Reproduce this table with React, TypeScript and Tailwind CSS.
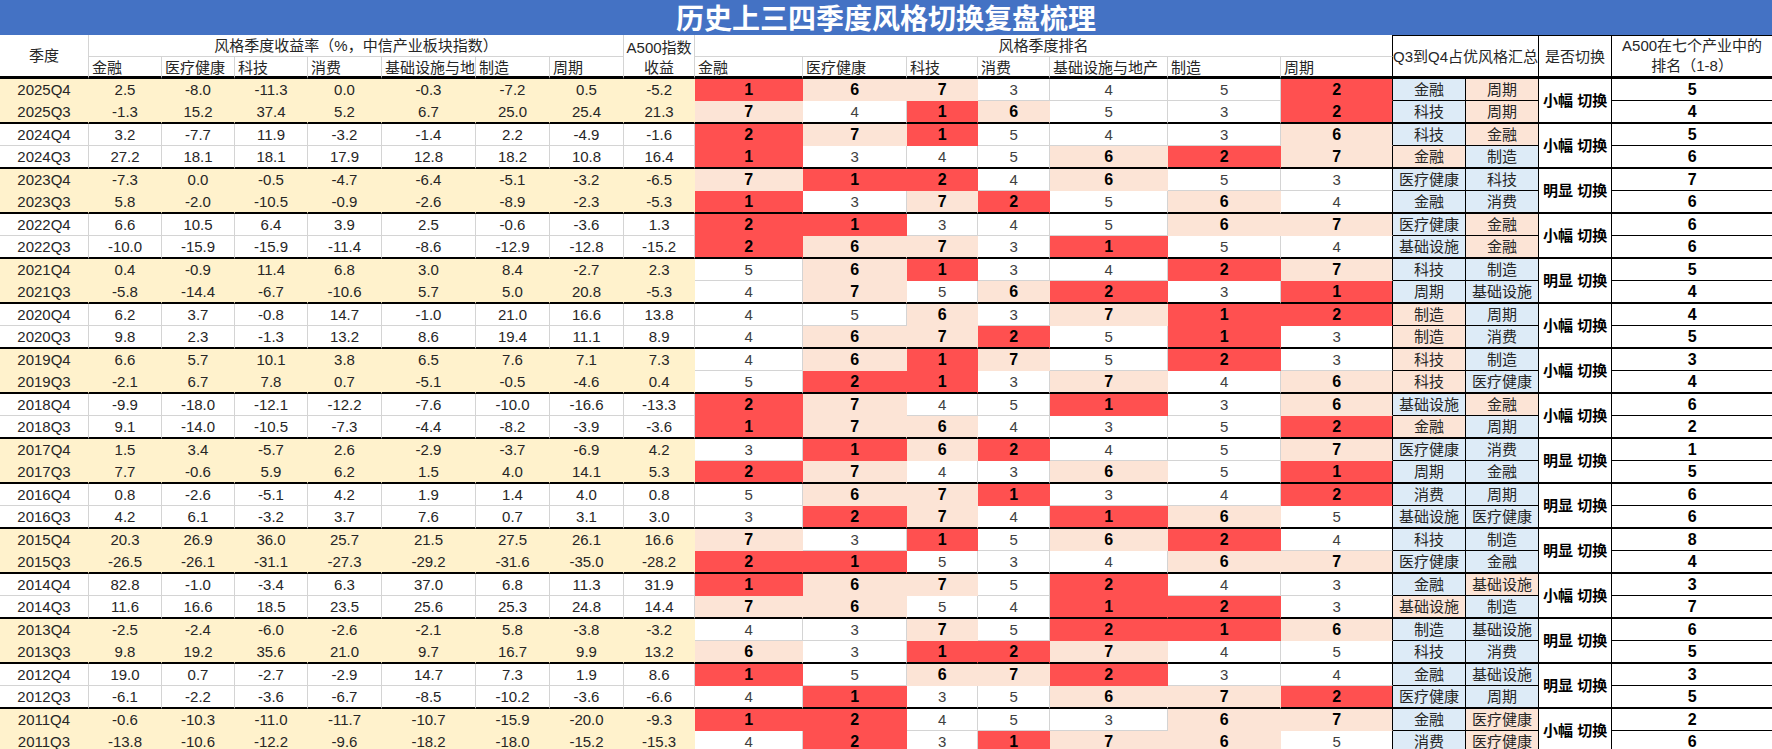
import React from 'react'

type Row = { q: string; ret: string[]; rk: number[]; pick: string[]; a500: number }
type Group = { sw: string; rows: Row[] }

const raw: [string, string, string, string, number][] = [
  ['2025Q4', '2.5 -8.0 -11.3 0.0 -0.3 -7.2 0.5 -5.2', '1 6 7 3 4 5 2', '金融 周期', 5],
  ['2025Q3', '-1.3 15.2 37.4 5.2 6.7 25.0 25.4 21.3', '7 4 1 6 5 3 2', '科技 周期', 4],
  ['2024Q4', '3.2 -7.7 11.9 -3.2 -1.4 2.2 -4.9 -1.6', '2 7 1 5 4 3 6', '科技 金融', 5],
  ['2024Q3', '27.2 18.1 18.1 17.9 12.8 18.2 10.8 16.4', '1 3 4 5 6 2 7', '金融 制造', 6],
  ['2023Q4', '-7.3 0.0 -0.5 -4.7 -6.4 -5.1 -3.2 -6.5', '7 1 2 4 6 5 3', '医疗健康 科技', 7],
  ['2023Q3', '5.8 -2.0 -10.5 -0.9 -2.6 -8.9 -2.3 -5.3', '1 3 7 2 5 6 4', '金融 消费', 6],
  ['2022Q4', '6.6 10.5 6.4 3.9 2.5 -0.6 -3.6 1.3', '2 1 3 4 5 6 7', '医疗健康 金融', 6],
  ['2022Q3', '-10.0 -15.9 -15.9 -11.4 -8.6 -12.9 -12.8 -15.2', '2 6 7 3 1 5 4', '基础设施 金融', 6],
  ['2021Q4', '0.4 -0.9 11.4 6.8 3.0 8.4 -2.7 2.3', '5 6 1 3 4 2 7', '科技 制造', 5],
  ['2021Q3', '-5.8 -14.4 -6.7 -10.6 5.7 5.0 20.8 -5.3', '4 7 5 6 2 3 1', '周期 基础设施', 4],
  ['2020Q4', '6.2 3.7 -0.8 14.7 -1.0 21.0 16.6 13.8', '4 5 6 3 7 1 2', '制造 周期', 4],
  ['2020Q3', '9.8 2.3 -1.3 13.2 8.6 19.4 11.1 8.9', '4 6 7 2 5 1 3', '制造 消费', 5],
  ['2019Q4', '6.6 5.7 10.1 3.8 6.5 7.6 7.1 7.3', '4 6 1 7 5 2 3', '科技 制造', 3],
  ['2019Q3', '-2.1 6.7 7.8 0.7 -5.1 -0.5 -4.6 0.4', '5 2 1 3 7 4 6', '科技 医疗健康', 4],
  ['2018Q4', '-9.9 -18.0 -12.1 -12.2 -7.6 -10.0 -16.6 -13.3', '2 7 4 5 1 3 6', '基础设施 金融', 6],
  ['2018Q3', '9.1 -14.0 -10.5 -7.3 -4.4 -8.2 -3.9 -3.6', '1 7 6 4 3 5 2', '金融 周期', 2],
  ['2017Q4', '1.5 3.4 -5.7 2.6 -2.9 -3.7 -6.9 4.2', '3 1 6 2 4 5 7', '医疗健康 消费', 1],
  ['2017Q3', '7.7 -0.6 5.9 6.2 1.5 4.0 14.1 5.3', '2 7 4 3 6 5 1', '周期 金融', 5],
  ['2016Q4', '0.8 -2.6 -5.1 4.2 1.9 1.4 4.0 0.8', '5 6 7 1 3 4 2', '消费 周期', 6],
  ['2016Q3', '4.2 6.1 -3.2 3.7 7.6 0.7 3.1 3.0', '3 2 7 4 1 6 5', '基础设施 医疗健康', 6],
  ['2015Q4', '20.3 26.9 36.0 25.7 21.5 27.5 26.1 16.6', '7 3 1 5 6 2 4', '科技 制造', 8],
  ['2015Q3', '-26.5 -26.1 -31.1 -27.3 -29.2 -31.6 -35.0 -28.2', '2 1 5 3 4 6 7', '医疗健康 金融', 4],
  ['2014Q4', '82.8 -1.0 -3.4 6.3 37.0 6.8 11.3 31.9', '1 6 7 5 2 4 3', '金融 基础设施', 3],
  ['2014Q3', '11.6 16.6 18.5 23.5 25.6 25.3 24.8 14.4', '7 6 5 4 1 2 3', '基础设施 制造', 7],
  ['2013Q4', '-2.5 -2.4 -6.0 -2.6 -2.1 5.8 -3.8 -3.2', '4 3 7 5 2 1 6', '制造 基础设施', 6],
  ['2013Q3', '9.8 19.2 35.6 21.0 9.7 16.7 9.9 13.2', '6 3 1 2 7 4 5', '科技 消费', 5],
  ['2012Q4', '19.0 0.7 -2.7 -2.9 14.7 7.3 1.9 8.6', '1 5 6 7 2 3 4', '金融 基础设施', 3],
  ['2012Q3', '-6.1 -2.2 -3.6 -6.7 -8.5 -10.2 -3.6 -6.6', '4 1 3 5 6 7 2', '医疗健康 周期', 5],
  ['2011Q4', '-0.6 -10.3 -11.0 -11.7 -10.7 -15.9 -20.0 -9.3', '1 2 4 5 3 6 7', '金融 医疗健康', 2],
  ['2011Q3', '-13.8 -10.6 -12.2 -9.6 -18.2 -18.0 -15.2 -15.3', '4 2 3 1 7 6 5', '消费 医疗健康', 6],
]

const switches = ['小幅', '小幅', '明显', '小幅', '明显', '小幅', '小幅', '小幅', '明显', '明显', '明显', '小幅', '明显', '明显', '小幅']

const rows: Row[] = raw.map(([q, ret, rk, pick, a500]) => ({
  q,
  ret: ret.split(' '),
  rk: rk.split(' ').map(Number),
  pick: pick.split(' '),
  a500,
}))

const groups: Group[] = switches.map((sw, i) => ({ sw, rows: [rows[i * 2], rows[i * 2 + 1]] }))

const widths = [89, 73, 73, 73, 74, 94, 74, 74, 71, 108, 104, 71, 72, 118, 113, 112, 73, 73, 73, 160]
const styles = ['金融', '医疗健康', '科技', '消费']

function rankCls(n: number) {
  if (n <= 2) return 'bg-[#ff5050] border-r-[#ff5050] font-bold text-black text-[16px]'
  if (n >= 6) return 'bg-[#fce4d6] border-r-[#fce4d6] font-bold text-black text-[16px]'
  return 'bg-white border-r-[#d4d4d4] text-[#404040]'
}

function rankBottom(n: number) {
  if (n <= 2) return 'border-b-[#ff5050]'
  if (n >= 6) return 'border-b-[#fce4d6]'
  return 'border-b-[#d4d4d4]'
}

function GroupRows({ g, yellow }: { g: Group; yellow: boolean }) {
  return (
    <>
      {g.rows.map((r, ri) => {
        const last = ri === 1
        const other = g.rows[1 - ri].pick
        const left = yellow ? 'bg-[#fff2cc] border-r-[#fff2cc]' : 'bg-white border-r-[#d4d4d4]'
        const leftB = last
          ? 'border-b-2 border-b-black'
          : yellow
            ? 'border-b border-b-[#fff2cc]'
            : 'border-b border-b-[#d4d4d4]'
        return (
          <tr key={r.q} className={last ? 'h-[23px]' : 'h-[22px]'}>
            <td className={`border-r ${left} ${leftB}`}>{r.q}</td>
            {r.ret.map((v, i) => (
              <td key={i} className={`border-r ${left} ${leftB}`}>
                {v}
              </td>
            ))}
            {r.rk.map((n, i) => (
              <td
                key={i}
                className={`border-r ${rankCls(n)} ${i === 6 ? '!border-r-black' : ''} ${
                  last ? 'border-b-2 border-b-black' : `border-b ${rankBottom(n)}`
                }`}
              >
                {n}
              </td>
            ))}
            {r.pick.map((p, i) => (
              <td
                key={i}
                className={`border-r border-r-black text-[#262626] ${
                  other.includes(p) ? 'bg-[#fce4d6]' : 'bg-[#ddebf7]'
                } ${last ? 'border-b-2 border-b-black' : 'border-b border-b-black'}`}
              >
                {p}
              </td>
            ))}
            {ri === 0 && (
              <td rowSpan={2} className="border-r border-r-black border-b-2 border-b-black bg-white font-bold text-black">
                {g.sw} 切换
              </td>
            )}
            <td
              className={`bg-white font-bold text-black text-[16px] ${
                last ? 'border-b-2 border-b-black' : 'border-b border-b-black'
              }`}
            >
              {r.a500}
            </td>
          </tr>
        )
      })}
    </>
  )
}

export default function App() {
  const sub = 'border-r border-r-[#d4d4d4] border-b-[3px] border-b-black text-left align-bottom pl-[3px] pb-[1px] font-normal whitespace-nowrap overflow-hidden'
  return (
    <div className="w-[1772px] h-[749px] overflow-hidden bg-white text-[#262626] font-[family-name:'Liberation_Sans','Noto_Sans_CJK_SC',sans-serif]">
      <div className="h-[35px] bg-[#4472c4] flex items-center justify-center">
        <span className="text-white font-bold text-[28px] leading-[35px] font-[family-name:'Noto_Sans_CJK_SC',sans-serif]">
          历史上三四季度风格切换复盘梳理
        </span>
      </div>
      <table className="table-fixed border-separate border-spacing-0 w-[1772px] text-[15px] leading-none text-center">
        <colgroup>
          {widths.map((w, i) => (
            <col key={i} style={{ width: w }} />
          ))}
        </colgroup>
        <thead>
          <tr className="h-[20px]">
            <th rowSpan={2} className="border-r border-r-[#d4d4d4] border-b-[3px] border-b-black font-normal">
              季度
            </th>
            <th colSpan={7} className="border-r border-r-[#d4d4d4] border-b border-b-[#d4d4d4] font-normal whitespace-nowrap">
              风格季度收益率（%，中信产业板块指数）
            </th>
            <th className="border-r border-r-[#d4d4d4] font-normal whitespace-nowrap pt-[2px]">A500指数</th>
            <th colSpan={7} className="border-r border-r-black border-b border-b-[#d4d4d4] font-normal">
              风格季度排名
            </th>
            <th colSpan={2} rowSpan={2} className="border-t border-t-black border-r border-r-black border-b-[3px] border-b-black font-normal whitespace-nowrap overflow-hidden">
              Q3到Q4占优风格汇总
            </th>
            <th rowSpan={2} className="border-t border-t-black border-r border-r-black border-b-[3px] border-b-black font-normal whitespace-nowrap">
              是否切换
            </th>
            <th rowSpan={2} className="border-t border-t-black border-b-[3px] border-b-black font-normal leading-[20px]">
              A500在七个产业中的
              <br />
              排名（1-8）
            </th>
          </tr>
          <tr className="h-[20px]">
            {[...styles, '基础设施与地', '制造', '周期'].map((s) => (
              <th key={'l' + s} className={sub}>
                {s}
              </th>
            ))}
            <th className="border-r border-r-[#d4d4d4] border-b-[3px] border-b-black font-normal align-bottom pb-[1px]">收益</th>
            {[...styles, '基础设施与地产', '制造', '周期'].map((s, i) => (
              <th key={'r' + s} className={`${sub} ${i === 6 ? '!border-r-black' : ''}`}>
                {s}
              </th>
            ))}
          </tr>
        </thead>
        <tbody>
          {groups.map((g, i) => (
            <GroupRows key={i} g={g} yellow={i % 2 === 0} />
          ))}
        </tbody>
      </table>
    </div>
  )
}
